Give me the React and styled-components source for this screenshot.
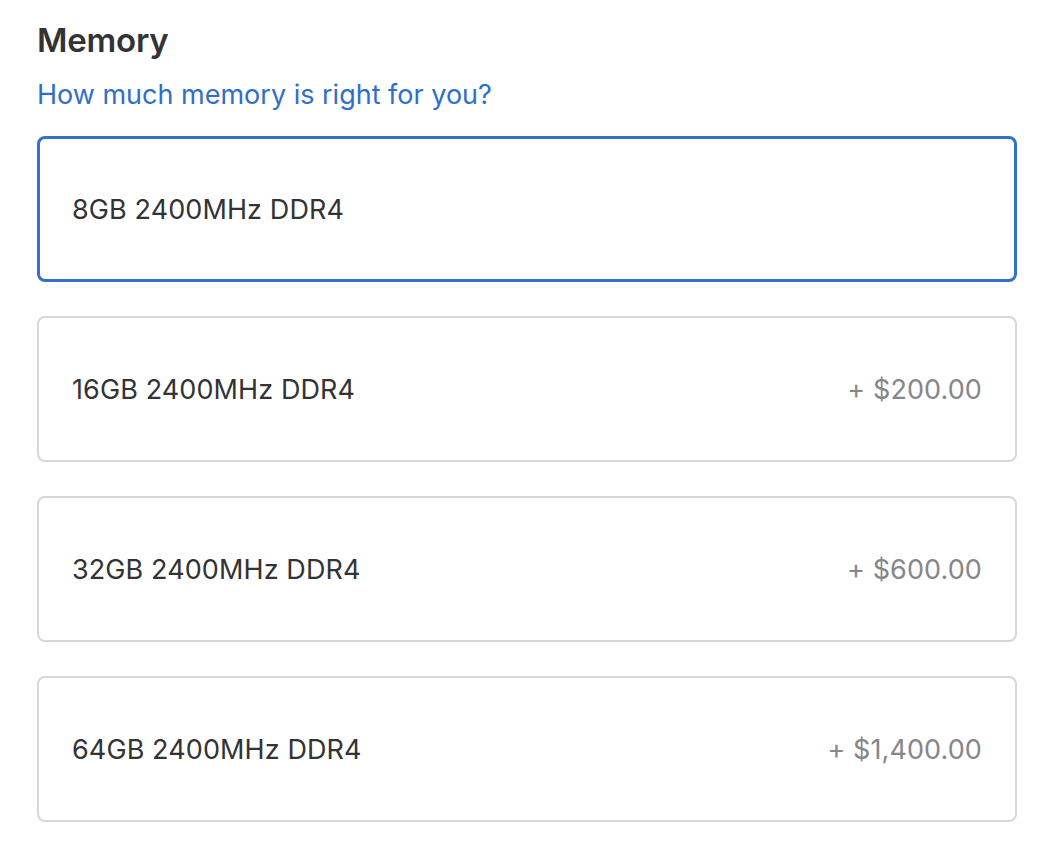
import React, { useState } from "react";
import styled, { createGlobalStyle } from "styled-components";

const GlobalStyle = createGlobalStyle`
  html, body {
    margin: 0;
    padding: 0;
    background: #ffffff;
  }
  body {
    font-family: Inter, "Noto Sans", "Liberation Sans", sans-serif;
    color: #333336;
    -webkit-font-smoothing: antialiased;
  }
`;

const options = [
  { id: "8", label: "8GB 2400MHz DDR4", price: null },
  { id: "16", label: "16GB 2400MHz DDR4", price: "+ $200.00" },
  { id: "32", label: "32GB 2400MHz DDR4", price: "+ $600.00" },
  { id: "64", label: "64GB 2400MHz DDR4", price: "+ $1,400.00" },
];

const App = () => {
  const [selected, setSelected] = useState("8");

  return (
    <>
      <GlobalStyle />
      <Section>
        <Title>Memory</Title>
        <HelpLink href="#">How much memory is right for you?</HelpLink>
        <OptionList>
          {options.map((opt) => (
            <Option
              key={opt.id}
              $active={selected === opt.id}
              onClick={() => setSelected(opt.id)}
            >
              <Label>{opt.label}</Label>
              {opt.price && <Price>{opt.price}</Price>}
            </Option>
          ))}
        </OptionList>
      </Section>
    </>
  );
};

const Section = styled.section`
  display: flex;
  flex-direction: column;
  padding: 20px 33px 31px 37px;
`;

const Title = styled.h2`
  margin: 0;
  font-size: 33px;
  font-weight: 600;
  line-height: 40px;
  letter-spacing: -0.2px;
  color: #333336;
`;

const HelpLink = styled.a`
  margin-top: 18px;
  font-size: 27px;
  line-height: 34px;
  color: #2f6fc8;
  text-decoration: none;
  align-self: flex-start;
`;

const OptionList = styled.div`
  display: flex;
  flex-direction: column;
  gap: 34px;
  margin-top: 24px;
`;

const Option = styled.div`
  box-sizing: border-box;
  height: 146px;
  display: flex;
  align-items: center;
  justify-content: space-between;
  border: ${(p) => (p.$active ? "3px solid #3272c8" : "2px solid #d7d7d7")};
  border-radius: 8px;
  padding: ${(p) => (p.$active ? "0 32px 0 32px" : "0 33px 0 33px")};
  cursor: pointer;
`;

const Label = styled.span`
  font-size: 27px;
  letter-spacing: 0.1px;
  color: #333336;
`;

const Price = styled.span`
  font-size: 27px;
  letter-spacing: 0.1px;
  color: #86868b;
`;

export default App;
